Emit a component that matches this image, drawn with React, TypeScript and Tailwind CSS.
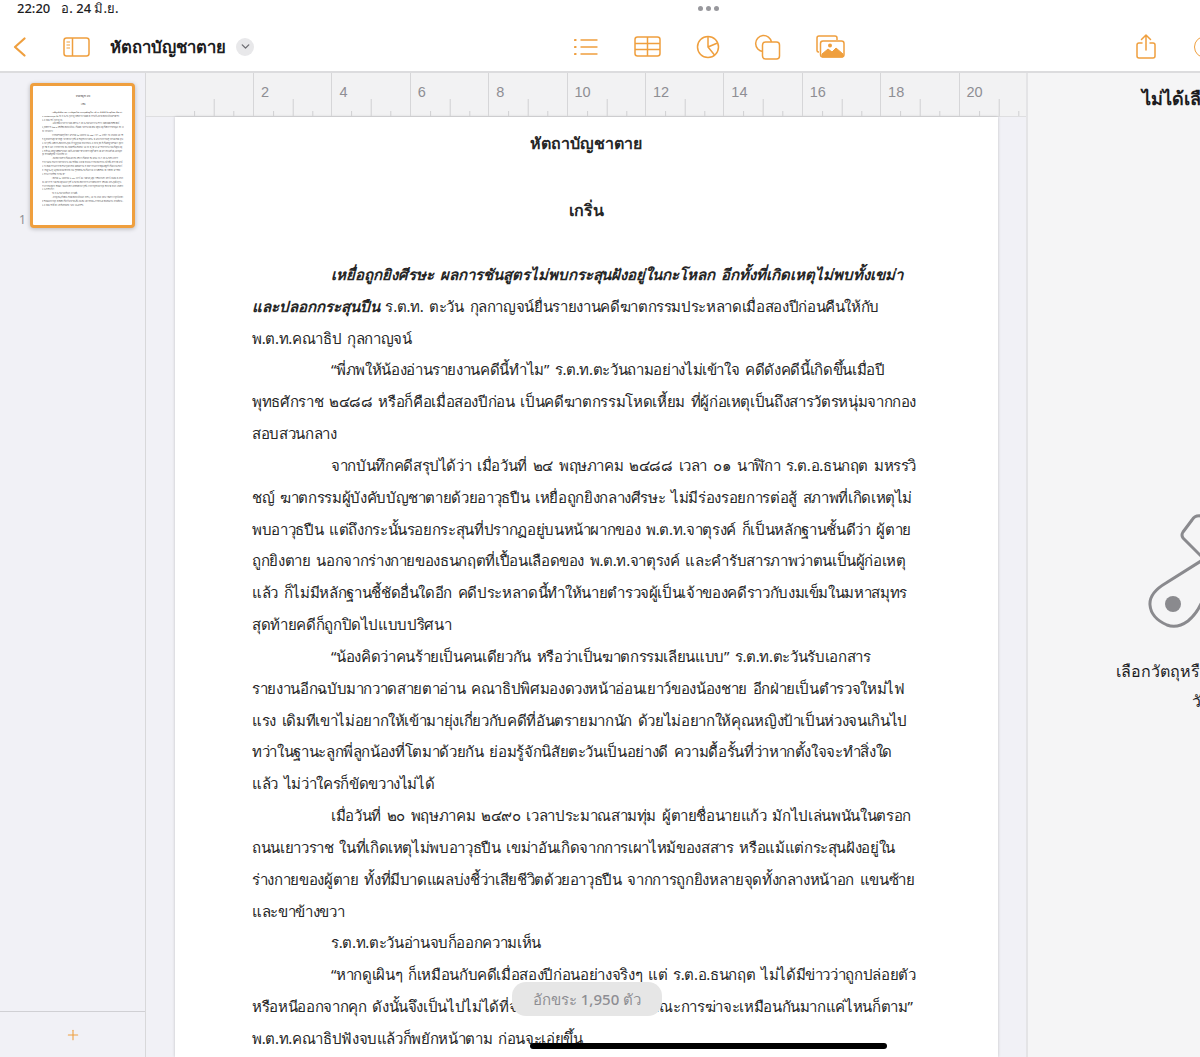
import { ChevronDown, Plus } from 'lucide-react';

const orange = '#ef9f3e';

// i = first line of a paragraph (indented)
const lines: { t: string; i?: boolean; b?: string }[] = [
    { i: true, b: 'เหยื่อถูกยิงศีรษะ ผลการชันสูตรไม่พบกระสุนฝังอยู่ในกะโหลก อีกทั้งที่เกิดเหตุไม่พบทั้งเขม่า', t: '' },
    { b: 'และปลอกกระสุนปืน', t: ' ร.ต.ท. ตะวัน กุลกาญจน์ยื่นรายงานคดีฆาตกรรมประหลาดเมื่อสองปีก่อนคืนให้กับ' },
    { t: 'พ.ต.ท.คณาธิป กุลกาญจน์' },
    { i: true, t: '“พี่ภพให้น้องอ่านรายงานคดีนี้ทำไม” ร.ต.ท.ตะวันถามอย่างไม่เข้าใจ คดีดังคดีนี้เกิดขึ้นเมื่อปี' },
    { t: 'พุทธศักราช ๒๔๘๘ หรือก็คือเมื่อสองปีก่อน เป็นคดีฆาตกรรมโหดเหี้ยม ที่ผู้ก่อเหตุเป็นถึงสารวัตรหนุ่มจากกอง' },
    { t: 'สอบสวนกลาง' },
    { i: true, t: 'จากบันทึกคดีสรุปได้ว่า เมื่อวันที่ ๒๔ พฤษภาคม ๒๔๘๘ เวลา ๐๑ นาฬิกา ร.ต.อ.ธนกฤต มหรรวิ' },
    { t: 'ชญ์ ฆาตกรรมผู้บังคับบัญชาตายด้วยอาวุธปืน เหยื่อถูกยิงกลางศีรษะ ไม่มีร่องรอยการต่อสู้ สภาพที่เกิดเหตุไม่' },
    { t: 'พบอาวุธปืน แต่ถึงกระนั้นรอยกระสุนที่ปรากฏอยู่บนหน้าผากของ พ.ต.ท.จาตุรงค์ ก็เป็นหลักฐานชั้นดีว่า ผู้ตาย' },
    { t: 'ถูกยิงตาย นอกจากร่างกายของธนกฤตที่เปื้อนเลือดของ พ.ต.ท.จาตุรงค์ และคำรับสารภาพว่าตนเป็นผู้ก่อเหตุ' },
    { t: 'แล้ว ก็ไม่มีหลักฐานชี้ชัดอื่นใดอีก คดีประหลาดนี้ทำให้นายตำรวจผู้เป็นเจ้าของคดีราวกับงมเข็มในมหาสมุทร' },
    { t: 'สุดท้ายคดีก็ถูกปิดไปแบบปริศนา' },
    { i: true, t: '“น้องคิดว่าคนร้ายเป็นคนเดียวกัน หรือว่าเป็นฆาตกรรมเลียนแบบ” ร.ต.ท.ตะวันรับเอกสาร' },
    { t: 'รายงานอีกฉบับมากวาดสายตาอ่าน คณาธิปพิศมองดวงหน้าอ่อนเยาว์ของน้องชาย อีกฝ่ายเป็นตำรวจใหม่ไฟ' },
    { t: 'แรง เดิมทีเขาไม่อยากให้เข้ามายุ่งเกี่ยวกับคดีที่อันตรายมากนัก ด้วยไม่อยากให้คุณหญิงป้าเป็นห่วงจนเกินไป' },
    { t: 'ทว่าในฐานะลูกพี่ลูกน้องที่โตมาด้วยกัน ย่อมรู้จักนิสัยตะวันเป็นอย่างดี ความดื้อรั้นที่ว่าหากตั้งใจจะทำสิ่งใด' },
    { t: 'แล้ว ไม่ว่าใครก็ขัดขวางไม่ได้' },
    { i: true, t: 'เมื่อวันที่ ๒๐ พฤษภาคม ๒๔๙๐ เวลาประมาณสามทุ่ม ผู้ตายชื่อนายแก้ว มักไปเล่นพนันในตรอก' },
    { t: 'ถนนเยาวราช ในที่เกิดเหตุไม่พบอาวุธปืน เขม่าอันเกิดจากการเผาไหม้ของสสาร หรือแม้แต่กระสุนฝังอยู่ใน' },
    { t: 'ร่างกายของผู้ตาย ทั้งที่มีบาดแผลบ่งชี้ว่าเสียชีวิตด้วยอาวุธปืน จากการถูกยิงหลายจุดทั้งกลางหน้าอก แขนซ้าย' },
    { t: 'และขาข้างขวา' },
    { i: true, t: 'ร.ต.ท.ตะวันอ่านจบก็ออกความเห็น' },
    { i: true, t: '“หากดูเผินๆ ก็เหมือนกับคดีเมื่อสองปีก่อนอย่างจริงๆ แต่ ร.ต.อ.ธนกฤต ไม่ได้มีข่าวว่าถูกปล่อยตัว' },
    { t: 'หรือหนีออกจากคุก ดังนั้นจึงเป็นไปไม่ได้ที่จะเป็นคนเดิม แม้ว่าลักษณะการฆ่าจะเหมือนกันมากแค่ไหนก็ตาม”' },
    { t: 'พ.ต.ท.คณาธิปฟังจบแล้วก็พยักหน้าตาม ก่อนจะเอ่ยขึ้น' },
];

function Doc() {
    return (
        <div className="pt-[10px] pl-[77px] text-[15px] tracking-[-0.35px] text-[#262626] [word-spacing:2.2px] [font-family:'Noto_Sans','Liberation_Sans',sans-serif]">
            <div className="mb-[35px] h-[32px] pr-[78px] text-center text-[16px] font-bold leading-[32px] tracking-normal">หัตถาบัญชาตาย</div>
            <div className="mb-[33px] h-[32px] pr-[78px] text-center text-[16px] font-bold leading-[32px] tracking-normal">เกริ่น</div>
            {lines.map((line, i) => (
                <div key={i} className={`h-[31.83px] whitespace-nowrap leading-[31.83px] ${line.i ? 'pl-[79px]' : ''}`}>
                    {line.b && <span className="font-bold italic tracking-[-0.02px]">{line.b}</span>}
                    {line.t}
                </div>
            ))}
        </div>
    );
}

function BackIcon() {
    return (
        <svg width="13" height="20" viewBox="0 0 13 20" fill="none" stroke={orange} strokeWidth="2.2" strokeLinecap="round" strokeLinejoin="round">
            <path d="M11.5 1.5 2 10l9.5 8.5" />
        </svg>
    );
}

function ListIcon() {
    return (
        <svg width="24" height="18" viewBox="0 0 24 18" fill="none" stroke={orange} strokeWidth="1.4" strokeLinecap="round">
            <path d="M7 2h16M7 9h16M7 16h16" />
            <path d="M1 2h.6M1 9h.6M1 16h.6" strokeWidth="2.2" />
        </svg>
    );
}

function TableIcon() {
    return (
        <svg width="27" height="21" viewBox="0 0 27 21" fill="none" stroke={orange} strokeWidth="1.5">
            <rect x="1" y="1" width="25" height="19" rx="2.5" />
            <path d="M1 7.5h25M1 13.5h25M13.5 1v19" />
        </svg>
    );
}

function ChartIcon() {
    return (
        <svg width="24" height="24" viewBox="0 0 24 24" fill="none" stroke={orange} strokeWidth="1.5" strokeLinejoin="round">
            <circle cx="12" cy="12" r="10.5" />
            <path d="M12 1.5V12l6.5 8M12 12l9.5-4" />
        </svg>
    );
}

function ShapeIcon() {
    return (
        <svg width="27" height="26" viewBox="0 0 27 26" fill="none" stroke={orange} strokeWidth="1.5">
            <path d="M9 17.5A8 8 0 1 1 17.5 8" />
            <rect x="8.5" y="8" width="17" height="17" rx="3" />
        </svg>
    );
}

function MediaIcon() {
    return (
        <svg width="29" height="23" viewBox="0 0 29 23" fill="none">
            <path d="M3 17H2.5A1.5 1.5 0 0 1 1 15.5V3a2 2 0 0 1 2-2h16a2 2 0 0 1 2 2v2" stroke={orange} strokeWidth="1.5" />
            <rect x="4.5" y="6" width="23.5" height="16" rx="2.5" stroke={orange} strokeWidth="1.5" />
            <path d="M6 22v-3l6-5 4 3 4-4 7 6v3z" fill={orange} stroke={orange} />
            <circle cx="14" cy="10.5" r="2" fill={orange} />
        </svg>
    );
}

function ShareIcon() {
    return (
        <svg width="20" height="25" viewBox="0 0 20 25" fill="none" stroke={orange} strokeWidth="1.5" strokeLinecap="round" strokeLinejoin="round">
            <path d="M6 9H3a2 2 0 0 0-2 2v11a2 2 0 0 0 2 2h14a2 2 0 0 0 2-2V11a2 2 0 0 0-2-2h-3" />
            <path d="M10 16V1.5M5.5 5.5 10 1l4.5 4.5" />
        </svg>
    );
}

function SidebarIcon() {
    return (
        <svg width="27" height="20" viewBox="0 0 27 20" fill="none" stroke={orange} strokeWidth="1.5">
            <rect x="1" y="1" width="25" height="18" rx="2.5" />
            <path d="M9.5 1v18" />
            <path d="M3.5 5h3.5M3.5 8h3.5M3.5 11h3.5" strokeWidth="1.2" />
        </svg>
    );
}

function Ruler() {
    const labels = ['', '2', '4', '6', '8', '10', '12', '14', '16', '18', '20'];
    return (
        <div className="flex h-[44px] overflow-hidden border-b border-[#dedee0] bg-[#f2f2f3] pl-[28.6px] [font-family:'Liberation_Sans',sans-serif]">
            {labels.map((label, i) => (
                <div key={i} className={`relative h-full w-[78.4px] shrink-0 pl-[7px] pt-[10px] text-[14.5px] leading-[18px] text-[#8e8e93] ${label ? 'border-l border-[#d6d6d8]' : ''}`}>
                    {label}
                    <svg className="absolute bottom-0 left-0" width="78" height="17" stroke="#d0d0d2">
                        <path d="M19.6 12v5M39.2 0v17M58.8 12v5" />
                    </svg>
                </div>
            ))}
            <div className="relative h-full w-[40px] shrink-0">
                <svg className="absolute bottom-0 left-0" width="1" height="17" stroke="#d0d0d2">
                    <path d="M0 0v17" />
                </svg>
            </div>
        </div>
    );
}

export default function App() {
    return (
        <div className="relative flex h-[1057px] w-[1200px] flex-col overflow-hidden bg-white text-black [font-family:'Noto_Sans','Liberation_Sans',sans-serif]">
            {/* status bar */}
            <div className="relative flex h-[24px] items-start pl-[17px] text-[13px] font-medium leading-[16px] text-[#1c1c1e]">
                <span>22:20</span>
                <span className="ml-[11px]">อ. 24 มิ.ย.</span>
                <div className="absolute left-[698px] top-[6px] flex gap-[3px]">
                    <span className="size-[5px] rounded-full bg-[#98989d]" />
                    <span className="size-[5px] rounded-full bg-[#98989d]" />
                    <span className="size-[5px] rounded-full bg-[#98989d]" />
                </div>
            </div>

            {/* toolbar */}
            <div className="flex h-[49px] items-center border-b-2 border-[#dcdcde] pb-[2px] [&>*]:shrink-0">
                <div className="ml-[13px]"><BackIcon /></div>
                <div className="ml-[37px]"><SidebarIcon /></div>
                <span className="ml-[20px] w-[118px] whitespace-nowrap text-[16.7px] font-bold text-[#1c1c1e]">หัตถาบัญชาตาย</span>
                <div className="ml-[8px] flex size-[18px] items-center justify-center rounded-full bg-[#e8e8ea]">
                    <ChevronDown className="size-[13px] text-[#6e6e73]" strokeWidth={2.5} />
                </div>
                <div className="ml-[320px]"><ListIcon /></div>
                <div className="ml-[36px]"><TableIcon /></div>
                <div className="ml-[35px]"><ChartIcon /></div>
                <div className="ml-[34px]"><ShapeIcon /></div>
                <div className="ml-[35px]"><MediaIcon /></div>
                <div className="ml-[291px]"><ShareIcon /></div>
                <div className="ml-[38px] size-[22px] rounded-full border-[1.5px] border-[#ef9f3e]" />
            </div>

            <div className="flex min-h-0 flex-1">
                {/* page thumbnails */}
                <div className="flex w-[146px] shrink-0 flex-col border-r border-[#d8d8da] bg-[#f1f1f6]">
                    <div className="flex flex-1 items-start pl-[19px] pt-[10px]">
                        <span className="mr-[5px] mt-[129px] w-[6px] text-[12px] leading-[16px] text-[#8e8e93]">1</span>
                        <div className="h-[145px] w-[105px] overflow-hidden rounded-[4px] border-[3px] border-[#ef9f3e] bg-white shadow-[0_1px_4px_rgba(0,0,0,0.25)]">
                            <div className="w-[823px] origin-top-left scale-[0.122] pt-[56px] opacity-70">
                                <Doc />
                            </div>
                        </div>
                    </div>
                    <div className="flex h-[46px] items-center justify-center border-t border-[#d0d0d4]">
                        <Plus className="size-[16px]" color={orange} strokeWidth={1.6} />
                    </div>
                </div>

                {/* document */}
                <div className="flex w-[882px] shrink-0 flex-col overflow-hidden border-r-2 border-[#e4e4e6] bg-[#f1f1f6]">
                    <Ruler />
                    <div className="min-h-0 flex-1 pl-[29px]">
                        <div className="h-full w-[823px] overflow-hidden bg-white shadow-[0_0_3px_rgba(0,0,0,0.2)]">
                            <Doc />
                        </div>
                    </div>
                </div>

                {/* inspector, runs past the right edge of the screen */}
                <div className="flex w-[396px] shrink-0 flex-col items-center bg-[#f5f5f6] pt-[13px]">
                    <div className="whitespace-nowrap text-[18px] font-bold leading-[24px] text-[#1c1c1e]">ไม่ได้เลือกสิ่งใดไว้เลย</div>
                    <svg className="mt-[403px]" width="160" height="120" viewBox="0 0 160 120" fill="none" stroke="#8a8a8e" strokeWidth="3" strokeLinejoin="round">
                        <path d="M55 3q-6-1-9 4l-9 12q-2 3 0 6l30 30" />
                        <path d="M55 48 20 70Q3 80 4 92q1 13 17 20 10 4 21-4 10-8 16-24" />
                        <circle cx="27" cy="91" r="8" fill="#8a8a8e" stroke="none" />
                    </svg>
                    <div className="mt-[23px] text-center text-[16px] font-medium leading-[30px] text-[#1c1c1e]">
                        <div className="whitespace-nowrap">เลือกวัตถุหรือข้อความเพื่อแก้ไข</div>
                        <div className="whitespace-nowrap">วัตถุนั้นได้</div>
                    </div>
                </div>
            </div>

            {/* word count pill */}
            <div className="absolute left-[512px] top-[982px] flex h-[34px] w-[150px] items-center justify-center rounded-[14px] bg-[#e6e6e6] text-[15px] font-medium text-[#8e8e93]">
                อักขระ 1,950 ตัว
            </div>
            {/* home indicator */}
            <div className="absolute left-[530px] top-[1043px] h-[6px] w-[357px] rounded-full bg-black" />
        </div>
    );
}
